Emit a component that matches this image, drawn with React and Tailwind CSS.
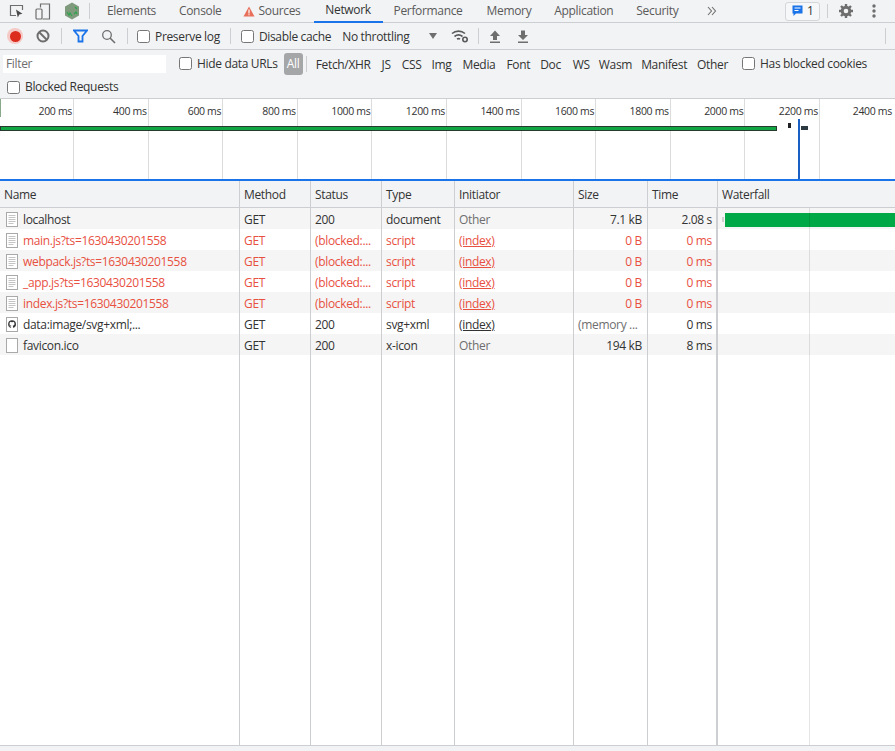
import React from "react";

const filterTypes = [
  ["Fetch/XHR", "ml-[9px]"],
  ["JS", "ml-[11px]"],
  ["CSS", "ml-[11px]"],
  ["Img", "ml-[10px]"],
  ["Media", "ml-[11px]"],
  ["Font", "ml-[11px]"],
  ["Doc", "ml-[10px]"],
  ["WS", "ml-[12px]"],
  ["Wasm", "ml-[9px]"],
  ["Manifest", "ml-[9px]"],
  ["Other", "ml-[10px]"],
];

const ticks = ["200 ms", "400 ms", "600 ms", "800 ms", "1000 ms", "1200 ms", "1400 ms", "1600 ms", "1800 ms", "2000 ms", "2200 ms", "2400 ms"];

const rows = [
  { name: "localhost", method: "GET", status: "200", type: "document", initiator: "Other", size: "7.1 kB", time: "2.08 s", icon: "doc" },
  { name: "main.js?ts=1630430201558", method: "GET", status: "(blocked:...", type: "script", initiator: "(index)", size: "0 B", time: "0 ms", icon: "doc", blocked: true },
  { name: "webpack.js?ts=1630430201558", method: "GET", status: "(blocked:...", type: "script", initiator: "(index)", size: "0 B", time: "0 ms", icon: "doc", blocked: true },
  { name: "_app.js?ts=1630430201558", method: "GET", status: "(blocked:...", type: "script", initiator: "(index)", size: "0 B", time: "0 ms", icon: "doc", blocked: true },
  { name: "index.js?ts=1630430201558", method: "GET", status: "(blocked:...", type: "script", initiator: "(index)", size: "0 B", time: "0 ms", icon: "doc", blocked: true },
  { name: "data:image/svg+xml;...", method: "GET", status: "200", type: "svg+xml", initiator: "(index)", size: "(memory ...", time: "0 ms", icon: "github", memory: true },
  { name: "favicon.ico", method: "GET", status: "200", type: "x-icon", initiator: "Other", size: "194 kB", time: "8 ms", icon: "blank" },
];

const columns = "grid grid-cols-[240px_71px_71px_73px_119px_74px_70px_1fr]";

function Checkbox() {
  return <span className="block w-[13px] h-[13px] bg-white border border-[#767676] rounded-[2.5px] shrink-0" />;
}

function FileIcon({ kind }) {
  return (
    <svg width="12" height="15" viewBox="0 0 12 15" className="shrink-0">
      <rect x="0.5" y="0.5" width="11" height="14" fill="#fff" stroke="#a9a9a9" />
      {kind === "doc" && (
        <path d="M2.5 3.5h7M2.5 5.5h7M2.5 7.5h7M2.5 9.5h7M2.5 11.5h5" stroke="#c4c4c4" strokeWidth="1" />
      )}
      {kind === "github" && (
        <path
          d="M6 3.2a3.9 3.9 0 0 0-1.2 7.6c.2 0 .3-.1.3-.2v-.8c-1.100.2-1.300-.5-1.300-.5-.2-.4-.4-.6-.4-.6-.4-.2 0-.2 0-.2.4 0 .6.4.6.4.3.6.9.4 1.100.3 0-.2.1-.4.2-.5-.9-.1-1.800-.4-1.800-1.900 0-.4.1-.8.4-1-.1-.1-.2-.5 0-1 0 0 .3-.1 1.100.4a3.700 3.700 0 0 1 2 0c.8-.5 1.100-.4 1.100-.4.2.5.1.9 0 1 .3.3.4.6.4 1 0 1.500-.9 1.800-1.800 1.900.1.1.3.4.3.8v1.100c0 .1.1.2.3.2A3.900 3.900 0 0 0 6 3.200z"
          fill="#333"
        />
      )}
    </svg>
  );
}

function TabBar() {
  return (
    <div className="flex items-center h-[23px] border-b border-[#ccced2] bg-[#f2f3f5] shrink-0 text-[#5a5a5a]">
      <svg width="16" height="16" viewBox="0 0 16 16" className="ml-[9px] shrink-0">
        <path d="M7 12.500H1.500v-10h12V7" fill="none" stroke="#6e6e6e" strokeWidth="1.200" />
        <path d="M7 6.500l1.800 8 1.500-3 3.200-.8z" fill="#4a4a4a" />
      </svg>
      <svg width="16" height="17" viewBox="0 0 16 17" className="ml-[10px] shrink-0">
        <path d="M5.500 4.500v-3.500h9v15h-7" fill="none" stroke="#6e6e6e" strokeWidth="1.200" />
        <rect x="1" y="6" width="6" height="10" rx="1" fill="none" stroke="#6e6e6e" strokeWidth="1.200" />
      </svg>
      <svg width="16" height="18" viewBox="0 0 16 18" className="ml-[13px] shrink-0">
        <path d="M8 0.500l7 4v9l-7 4-7-4v-9z" fill="#7f9a7d" />
        <path d="M3 10l2 3 1-2 2 3M10 12l2-2 1 2M11 5l2 2" fill="none" stroke="#2fa44f" strokeWidth="1.200" />
      </svg>
      <span className="block w-px h-[16px] bg-[#ccced2] ml-[9px] shrink-0" />
      <span className="ml-[17px]">Elements</span>
      <span className="ml-[23px]">Console</span>
      <svg width="12" height="11" viewBox="0 0 12 11" className="ml-[21px] shrink-0">
        <path d="M6 0.500l5.500 10H0.500z" fill="#e8705a" />
        <path d="M6 3.500v4M6 8.300v1" stroke="#fff" strokeWidth="1.200" />
      </svg>
      <span className="ml-[4px]">Sources</span>
      <div className="ml-[13px] h-[23px] w-[69px] flex items-center justify-center border-b-2 border-[#1a73e8] text-[#333]">
        Network
      </div>
      <span className="ml-[11px]">Performance</span>
      <span className="ml-[24px]">Memory</span>
      <span className="ml-[23px]">Application</span>
      <span className="ml-[23px]">Security</span>
      <svg width="10" height="10" viewBox="0 0 10 10" className="ml-[29px] shrink-0">
        <path d="M1 1l3.500 4L1 9M5 1l3.500 4L5 9" fill="none" stroke="#6e6e6e" strokeWidth="1.100" />
      </svg>
      <div className="ml-[68px] flex items-center justify-center gap-[4px] w-[35px] h-[19px] border border-[#d5d6d9] rounded-[3px] bg-[#f6f7f8] text-[#333] shrink-0">
        <svg width="11" height="12" viewBox="0 0 11 12">
          <path d="M0.500 0.500h10v8h-6.500L1.500 11V8.500h-1z" fill="#1a73e8" />
          <path d="M2.500 3h6M2.500 5.500h4" stroke="#fff" strokeWidth="1" />
        </svg>
        <span>1</span>
      </div>
      <span className="block w-px h-[14px] bg-[#ccced2] ml-[7px] shrink-0" />
      <svg width="16" height="16" viewBox="0 0 16 16" className="ml-[10px] shrink-0">
        <circle cx="8" cy="8" r="3.800" fill="none" stroke="#6e6e6e" strokeWidth="3" />
        <path d="M8 1v3M8 12v3M1 8h3M12 8h3M3 3l2 2M11 11l2 2M13 3l-2 2M5 11l-2 2" stroke="#6e6e6e" strokeWidth="2.400" />
      </svg>
      <svg width="4" height="14" viewBox="0 0 4 14" className="ml-[18px] shrink-0">
        <circle cx="2" cy="2" r="1.700" fill="#6e6e6e" />
        <circle cx="2" cy="7" r="1.700" fill="#6e6e6e" />
        <circle cx="2" cy="12" r="1.700" fill="#6e6e6e" />
      </svg>
    </div>
  );
}

function Toolbar() {
  return (
    <div className="flex items-center h-[27px] border-b border-[#ccced2] bg-[#f2f3f5] shrink-0 text-[#333]">
      <span className="ml-[7px] w-[16px] h-[16px] rounded-full bg-[#f5c9c5] flex items-center justify-center shrink-0">
        <span className="block w-[11px] h-[11px] rounded-full bg-[#dc2c1e]" />
      </span>
      <svg width="14" height="14" viewBox="0 0 14 14" className="ml-[13px] shrink-0">
        <circle cx="7" cy="7" r="5.500" fill="none" stroke="#6e6e6e" strokeWidth="2" />
        <path d="M3 3l8 8" stroke="#6e6e6e" strokeWidth="2" />
      </svg>
      <span className="block w-px h-[16px] bg-[#ccced2] ml-[11px] shrink-0" />
      <svg width="15" height="14" viewBox="0 0 15 14" className="ml-[11px] shrink-0">
        <path d="M1 1.500h13L9.500 7v5.500h-4V7z" fill="none" stroke="#1a73e8" strokeWidth="1.800" />
      </svg>
      <svg width="15" height="15" viewBox="0 0 15 15" className="ml-[13px] shrink-0">
        <circle cx="6" cy="6" r="4.300" fill="none" stroke="#6e6e6e" strokeWidth="1.300" />
        <path d="M9 9l5 5" stroke="#6e6e6e" strokeWidth="1.600" />
      </svg>
      <span className="block w-px h-[16px] bg-[#ccced2] ml-[11px] shrink-0" />
      <span className="ml-[9px]"><Checkbox /></span>
      <span className="ml-[5px] pt-[2px]">Preserve log</span>
      <span className="block w-px h-[16px] bg-[#ccced2] ml-[10px] shrink-0" />
      <span className="ml-[10px]"><Checkbox /></span>
      <span className="ml-[5px] pt-[2px]">Disable cache</span>
      <span className="ml-[11px] pt-[2px]">No throttling</span>
      <svg width="8" height="6" viewBox="0 0 8 6" className="ml-[19px] shrink-0">
        <path d="M0 0h8L4 6z" fill="#6e6e6e" />
      </svg>
      <svg width="18" height="14" viewBox="0 0 18 14" className="ml-[14px] shrink-0">
        <path d="M1 4.500a10 10 0 0 1 13 0M3.500 7.500a6.500 6.500 0 0 1 8 0M6 10a3 3 0 0 1 3 0" fill="none" stroke="#5a5a5a" strokeWidth="1.600" />
        <circle cx="14" cy="10.500" r="2.200" fill="none" stroke="#5a5a5a" strokeWidth="1.600" />
      </svg>
      <span className="block w-px h-[16px] bg-[#ccced2] ml-[9px] shrink-0" />
      <svg width="12" height="13" viewBox="0 0 12 13" className="ml-[10px] shrink-0">
        <path d="M6 0.500l5 5.500H8v4H4V6H1zM1 11.500h10v1.500H1z" fill="#6e6e6e" />
      </svg>
      <svg width="12" height="13" viewBox="0 0 12 13" className="ml-[16px] shrink-0">
        <path d="M4 0.500h4v4.500h3l-5 5-5-5h3zM1 11.500h10v1.500H1z" fill="#6e6e6e" />
      </svg>
      <span className="block w-px h-[16px] bg-[#ccced2] ml-[356px] shrink-0" />
    </div>
  );
}

function FilterBar() {
  return (
    <div className="h-[49px] border-b border-[#ccced2] bg-[#f2f3f5] shrink-0 text-[#333]">
      <div className="flex items-center h-[27px]">
        <div className="ml-[3px] w-[163px] h-[18px] bg-white flex items-center pl-[3px] text-[#6e6e6e] shrink-0">Filter</div>
        <span className="ml-[13px]"><Checkbox /></span>
        <span className="ml-[5px]">Hide data URLs</span>
        <span className="ml-[6px] w-[19px] h-[22px] rounded-[3px] bg-[#a5a6a8] text-white flex items-center justify-center shrink-0">All</span>
        <span className="block w-px h-[16px] bg-[#ccced2] ml-[3px] shrink-0" />
        {filterTypes.map(([label, spacing]) => (
          <span key={label} className={`${spacing} pt-[2px]`}>{label}</span>
        ))}
        <span className="ml-[14px]"><Checkbox /></span>
        <span className="ml-[5px]">Has blocked cookies</span>
      </div>
      <div className="flex items-center h-[21px] pb-[1px]">
        <span className="ml-[7px]"><Checkbox /></span>
        <span className="ml-[5px]">Blocked Requests</span>
      </div>
    </div>
  );
}

function Overview() {
  return (
    <div className="relative h-[82px] bg-white border-b-2 border-[#1a73e8] shrink-0 overflow-hidden">
      <div className="flex h-full">
        {ticks.map((t, i) => (
          <div
            key={t}
            className={
              i === 11
                ? "w-[75px] shrink-0 text-right pr-[3px] pt-[5px] text-[10.5px] text-[#333]"
                : i === 0
                  ? "w-[74px] shrink-0 border-r border-[#dcdcdc] text-right pr-[1px] pt-[5px] text-[10.5px] text-[#333]"
                  : "w-[74.600px] shrink-0 border-r border-[#dcdcdc] text-right pr-[1px] pt-[5px] text-[10.5px] text-[#333]"
            }
          >
            {t}
          </div>
        ))}
      </div>
      <div className="absolute left-0 top-0 w-px h-[18px] bg-[#8aa88a]" />
      <div className="absolute left-0 top-[27px] w-[777px] h-[5px] bg-[#12a544] border border-[#263b2d]" />
      <div className="absolute left-[788px] top-[24px] w-[3px] h-[5px] bg-[#202124]" />
      <div className="absolute left-[801px] top-[27px] w-[7px] h-[4px] bg-[#2d3a42]" />
      <div className="absolute left-[798px] top-[20px] w-[2px] h-[60px] bg-[#1a5fc4]" />
    </div>
  );
}

function Row({ row, index }) {
  const color = row.blocked ? "text-[#e8503f]" : "text-[#333]";
  const bg = index % 2 === 0 ? "bg-[#f5f5f5]" : "bg-white";
  return (
    <div className={`${columns} h-[21px] pt-[2px] ${bg} ${color}`}>
      <div className="flex items-center pl-[6px] gap-[5px] whitespace-nowrap overflow-hidden">
        <FileIcon kind={row.icon} />
        <span>{row.name}</span>
      </div>
      <div className="flex items-center pl-[4px]">{row.method}</div>
      <div className="flex items-center pl-[4px] whitespace-nowrap overflow-hidden">{row.status}</div>
      <div className="flex items-center pl-[4px]">{row.type}</div>
      <div className={row.initiator === "Other" ? "flex items-center pl-[4px] text-[#6e6e6e]" : "flex items-center pl-[4px] underline"}>{row.initiator}</div>
      <div className={row.memory ? "flex items-center pl-[4px] text-[#6e6e6e] whitespace-nowrap" : "flex items-center justify-end pr-[6px]"}>{row.size}</div>
      <div className="flex items-center justify-end pr-[6px]">{row.time}</div>
      <div className="flex items-center">
        {index === 0 && (
          <>
            <span className="ml-[4px] block w-[2px] h-[5px] bg-[#d0d0d0]" />
            <span className="ml-[1px] block h-[14px] flex-1 bg-[#00a846]" />
          </>
        )}
      </div>
    </div>
  );
}

export default function App() {
  return (
    <div className="h-[751px] w-[895px] overflow-hidden flex flex-col bg-white text-[12px] font-['Open_Sans','Noto_Sans',sans-serif] text-[#333] tracking-[-0.33px]">
      <TabBar />
      <Toolbar />
      <FilterBar />
      <Overview />
      <div className={`${columns} h-[27px] bg-[#f2f3f5] border-b border-[#ccced2] shrink-0 text-[#333]`}>
        {["Name", "Method", "Status", "Type", "Initiator", "Size", "Time"].map((h) => (
          <div key={h} className="flex items-center pl-[4px] pt-[1px] border-r border-[#ccced2]">{h}</div>
        ))}
        <div className="flex items-center pl-[4px] pt-[1px]">Waterfall</div>
      </div>
      <div className="relative flex-1">
        {rows.map((row, i) => (
          <Row key={row.name} row={row} index={i} />
        ))}
        <div className={`${columns} absolute inset-0 pointer-events-none`}>
          <div className="border-r border-[#ccced2]" />
          <div className="border-r border-[#ccced2]" />
          <div className="border-r border-[#ccced2]" />
          <div className="border-r border-[#ccced2]" />
          <div className="border-r border-[#ccced2]" />
          <div className="border-r border-[#ccced2]" />
          <div className="border-r-2 border-[#ccced2]" />
          <div className="relative">
            <div className="absolute left-[91px] top-0 bottom-0 w-px bg-black/10" />
          </div>
        </div>
      </div>
      <div className="h-[6px] bg-[#f2f3f5] border-t border-[#ccced2] shrink-0" />
    </div>
  );
}
